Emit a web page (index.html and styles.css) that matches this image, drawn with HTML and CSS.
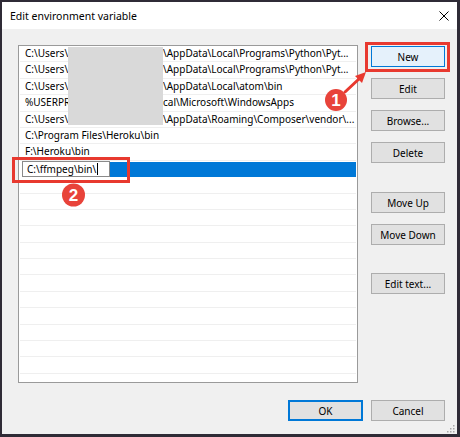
FILE: index.html
```html
<!DOCTYPE html>
<html>
<head>
<meta charset="utf-8">
<link rel="stylesheet" href="styles.css">
</head>
<body>
<div class="window">
  <div class="titlebar">
    <span class="title">Edit environment variable</span>
    <svg class="close" width="10" height="10" viewBox="0 0 10 10"><path d="M0.5 0.5 L9.5 9.5 M9.5 0.5 L0.5 9.5" stroke="#000" stroke-width="1"/></svg>
  </div>
  <div class="content">
    <div class="main">
      <div class="list">
        <div class="row"><span class="pre">C:\Users\</span><span class="post">\AppData\Local\Programs\Python\Pyt...</span></div>
        <div class="row"><span class="pre">C:\Users\</span><span class="post">\AppData\Local\Programs\Python\Pyt...</span></div>
        <div class="row"><span class="pre">C:\Users\</span><span class="post">\AppData\Local\atom\bin</span></div>
        <div class="row"><span class="pre">%USERPR</span><span class="post">cal\Microsoft\WindowsApps</span></div>
        <div class="row"><span class="pre">C:\Users\</span><span class="post">\AppData\Roaming\Composer\vendor\...</span></div>
        <div class="row">C:\Program Files\Heroku\bin</div>
        <div class="row">F:\Heroku\bin</div>
        <div class="row selected"><span class="edit">C:\ffmpeg\bin\<span class="caret"></span></span><span class="sel"></span></div>
        <div class="row"></div>
        <div class="row"></div>
        <div class="row"></div>
        <div class="row"></div>
        <div class="row"></div>
        <div class="row"></div>
        <div class="row"></div>
        <div class="row"></div>
        <div class="row"></div>
        <div class="row"></div>
        <div class="row"></div>
        <div class="row"></div>
        <div class="row"></div>
        <div class="blur"></div>
      </div>
      <div class="buttons">
        <div class="btn focus">New</div>
        <div class="btn">Edit</div>
        <div class="btn">Browse...</div>
        <div class="btn">Delete</div>
        <div class="btn sep1">Move Up</div>
        <div class="btn">Move Down</div>
        <div class="btn sep2">Edit text...</div>
      </div>
    </div>
    <div class="footer">
      <div class="btn ok">OK</div>
      <div class="btn">Cancel</div>
    </div>
  </div>
</div>
<svg class="overlay" width="460" height="437" viewBox="0 0 460 437">
  <rect x="366.5" y="43.5" width="82" height="27" fill="none" stroke="#e8392f" stroke-width="3"/>
  <rect x="13.5" y="158.5" width="115" height="23" fill="none" stroke="#e8392f" stroke-width="3"/>
  <line x1="345" y1="92" x2="360" y2="78" stroke="#e8392f" stroke-width="3" stroke-linecap="round"/>
  <polygon points="366,72 355,76 362,83" fill="#e8392f"/>
  <circle cx="336" cy="100" r="11" fill="#e8433a"/>
  <text x="336" y="106" class="num">1</text>
  <circle cx="73.5" cy="195" r="11.5" fill="#e8433a"/>
  <text x="73.5" y="201" class="num">2</text>
  <g fill="#a8a8a8">
    <rect x="453" y="425" width="1.5" height="1.5"/>
    <rect x="450" y="428" width="1.5" height="1.5"/>
    <rect x="453" y="428" width="1.5" height="1.5"/>
    <rect x="447" y="431" width="1.5" height="1.5"/>
    <rect x="450" y="431" width="1.5" height="1.5"/>
    <rect x="453" y="431" width="1.5" height="1.5"/>
  </g>
</svg>
</body>
</html>
```
FILE: styles.css
```css
html, body {
  margin: 0;
  padding: 0;
}
body {
  position: relative;
  width: 460px;
  height: 437px;
  font-family: "Noto Sans", "Open Sans", sans-serif;
  font-size: 10px;
  color: #000;
  background: #2f2b36;
}
.window {
  width: 460px;
  height: 437px;
  box-sizing: border-box;
  border-style: solid;
  border-color: #2f2b36;
  border-width: 2px 3px 3px 2px;
  background: #f0f0f0;
  display: flex;
  flex-direction: column;
}
.titlebar {
  height: 27px;
  background: #fff;
  display: flex;
  align-items: center;
  justify-content: space-between;
  padding: 0 8px;
  flex: none;
}
.title {
  font-size: 10.5px;
}
.close {
  display: block;
}
.content {
  padding: 16px 12px 13px 16px;
  display: flex;
  flex-direction: column;
}
.main {
  display: flex;
  gap: 13px;
  height: 338px;
}
.list {
  position: relative;
  width: 340px;
  height: 338px;
  box-sizing: border-box;
  border: 1px solid #9a9a9a;
  background: #fff;
  overflow: hidden;
}
.row {
  height: 16.4px;
  box-sizing: border-box;
  margin: 0 1px;
  padding-left: 5px;
  border-bottom: 1px solid #efefef;
  line-height: 15px;
  white-space: nowrap;
  display: flex;
}
.pre {
  width: 43px;
  flex: none;
}
.post {
  margin-left: 95px;
}
.row.selected {
  padding-left: 0;
  border-bottom: none;
  align-items: stretch;
}
.edit {
  margin-left: 2px;
  width: 88px;
  box-sizing: border-box;
  border: 1px solid #8a8a8a;
  background: #fff;
  padding-left: 4px;
  line-height: 14px;
  display: flex;
  align-items: center;
  flex: none;
}
.caret {
  display: inline-block;
  width: 1px;
  height: 12px;
  background: #000;
  margin-left: 1px;
}
.sel {
  flex: 1;
  background: #0078d7;
  margin: 1px 0 0;
}
.blur {
  position: absolute;
  left: 49px;
  top: 1px;
  width: 95px;
  height: 78px;
  background: #d9d9d9;
}
.buttons {
  display: flex;
  flex-direction: column;
  gap: 11px;
  padding-top: 1px;
  width: 74px;
}
.btn {
  height: 21px;
  box-sizing: border-box;
  border: 1px solid #adadad;
  background: #e1e1e1;
  display: flex;
  align-items: center;
  justify-content: center;
  width: 74px;
}
.btn.focus {
  border-color: #0078d7;
  background: #e5f1fb;
}
.sep1 {
  margin-top: 18px;
}
.sep2 {
  margin-top: 17px;
}
.footer {
  margin-top: 17px;
  display: flex;
  justify-content: flex-end;
  gap: 8px;
}
.btn.ok {
  width: 75px;
  border: 2px solid #0078d7;
}
.overlay {
  position: absolute;
  left: 0;
  top: 0;
  pointer-events: none;
}
.num {
  fill: #fff;
  font-family: "Liberation Sans", Arial, sans-serif;
  font-weight: bold;
  font-size: 17px;
  text-anchor: middle;
}
```
